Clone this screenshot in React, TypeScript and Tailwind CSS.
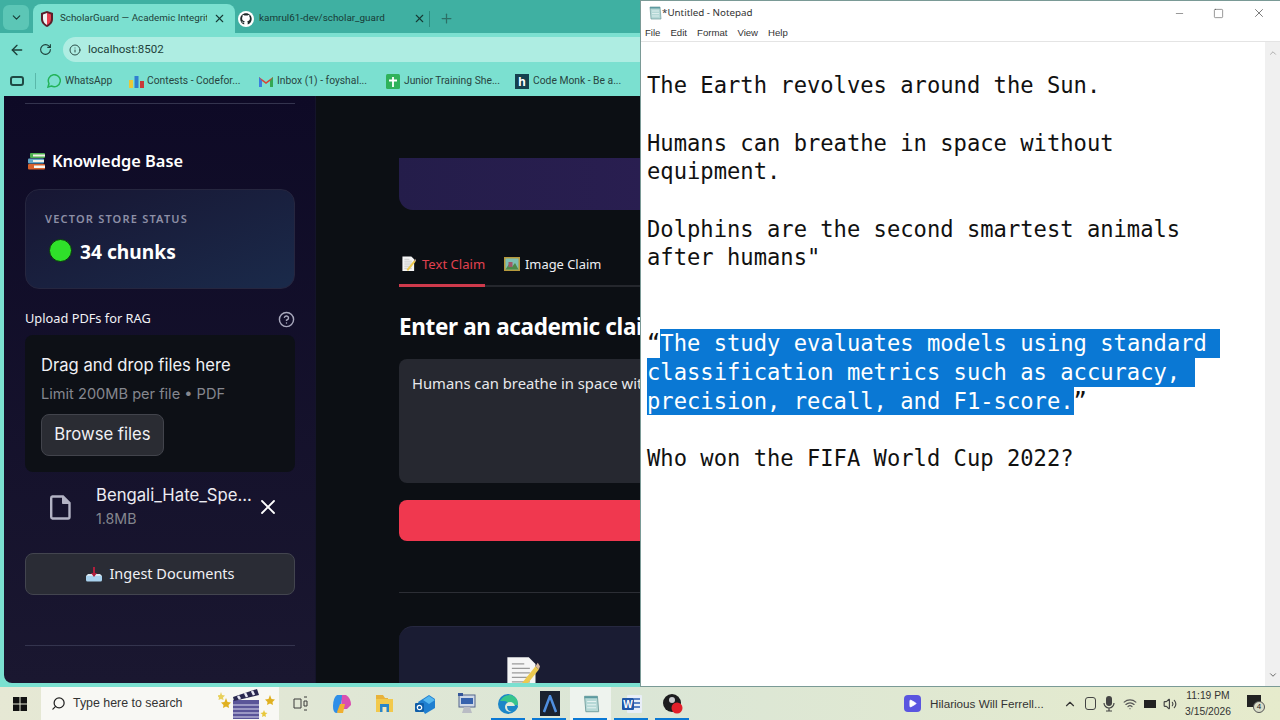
import {
  ArrowLeft,
  ChevronDown,
  ChevronUp,
  CircleHelp,
  Info,
  Minus,
  Play,
  Plus,
  RotateCw,
  Search,
  Square,
  Volume2,
  Wifi,
  X,
} from "lucide-react";
import type { ReactNode } from "react";

const sans = "font-['Noto_Sans',sans-serif]";
const inter = "font-['Inter',sans-serif]";
const roboto = "font-['Roboto',sans-serif]";
const mono = "font-['DejaVu_Sans_Mono',monospace]";

function Shield() {
  return (
    <svg width="14" height="16" viewBox="0 0 14 16" className="shrink-0">
      <path d="M7 0 L13 2 V8 C13 12 10 14.5 7 16 C4 14.5 1 12 1 8 V2 Z" fill="#5b1f2a" />
      <path d="M7 2 L11 3.4 V8 C11 11 9 12.8 7 14 Z" fill="#e8404f" />
      <path d="M7 2 L3 3.4 V8 C3 11 5 12.8 7 14 Z" fill="#f4f4f4" />
    </svg>
  );
}

function GithubMark() {
  return (
    <svg width="16" height="16" viewBox="0 0 16 16" className="shrink-0">
      <circle cx="8" cy="8" r="8" fill="#fff" />
      <path
        d="M8 2.2c-3.2 0-5.8 2.6-5.8 5.8 0 2.6 1.7 4.7 4 5.5v-1.6c-1.6.3-2-.7-2.2-1.2-.5-.8-1-.6-.5-.8.7 0 1.1.8 1.3 1 .6.7 1.2.5 1.5.3 0-.5.3-.8.5-1-1.4-.2-2.7-.7-2.7-3 0-.7.2-1.2.6-1.6-.1-.2-.3-.8.1-1.6 0 0 .5-.2 1.7.6a5.6 5.6 0 0 1 3 0c1.2-.8 1.7-.6 1.7-.6.3.8.1 1.4.1 1.6.4.4.6.9.6 1.6 0 2.3-1.3 2.8-2.7 3 .2.2.5.6.5 1.2v2.1c2.3-.8 4-2.9 4-5.5C13.8 4.8 11.2 2.2 8 2.2z"
        fill="#1f2a2a"
      />
    </svg>
  );
}

function Books() {
  return (
    <svg width="18" height="17" viewBox="0 0 18 17" className="shrink-0">
      <rect x="2" y="0" width="15" height="5" rx="1" fill="#4caf50" />
      <rect x="5" y="1.5" width="12" height="2" fill="#f1f1e6" />
      <rect x="0" y="5.5" width="16" height="5" rx="1" fill="#64a8c8" />
      <rect x="5" y="7" width="11" height="2" fill="#f1f1e6" />
      <rect x="0" y="11" width="17" height="5.5" rx="1" fill="#d9622b" />
      <rect x="6" y="12.5" width="11" height="2.5" fill="#f7f7f0" />
    </svg>
  );
}

function Inbox() {
  return (
    <svg width="18" height="15" viewBox="0 0 18 15" className="shrink-0">
      <path d="M1 9 H17 V13 a1.5 1.5 0 0 1 -1.5 1.5 H2.5 A1.5 1.5 0 0 1 1 13 Z" fill="#a9d2ee" />
      <path d="M1 9 L3 7 H15 L17 9 Z" fill="#d7e8f2" />
      <path d="M8 0 H10 V6 H12 L9 10 L6 6 H8 Z" fill="#b01e3c" />
    </svg>
  );
}

function Memo({ size = 16 }: { size?: number }) {
  return (
    <svg width={size} height={size} viewBox="0 0 32 32" className="shrink-0">
      <path d="M3 1 H22 L28 7 V32 H3 Z" fill="#f5f5f5" />
      <path d="M7 7 H18 M7 11 H23 M7 15 H23 M7 19 H23 M7 23 H23 M7 27 H23" stroke="#9a9a9a" strokeWidth="1" />
      <path d="M12 29 L28 9 L31 12 L15 32 Z" fill="#ecc94f" />
      <path d="M28 9 L30 6 L32 9 L31 12 Z" fill="#d6b8a0" />
    </svg>
  );
}

function Picture() {
  return (
    <svg width="16" height="14" viewBox="0 0 16 14" className="shrink-0">
      <rect width="16" height="14" fill="#b79a3c" />
      <rect x="1.5" y="1.5" width="13" height="11" fill="#7fc0b4" />
      <path d="M1.5 12.5 L5 7 L8 10 L11 6 L14.5 12.5 Z" fill="#4d8a48" />
      <rect x="4.5" y="5" width="4" height="5" fill="#a05a6a" />
    </svg>
  );
}

function Clapper() {
  return (
    <svg width="58" height="30" viewBox="0 0 58 30">
      <path d="M3 3 L4 6 L7 6.5 L5 8.5 L5.5 11 L3 10 L0.5 11 L1 8.5 L-1 6.5 L2 6 Z" fill="#e8d05a" />
      <path d="M8 9 L9.5 13 L13 13.5 L10.5 16 L11 19 L8 17.5 L5 19 L5.5 16 L3 13.5 L6.5 13 Z" fill="#e0b020" />
      <path d="M52 6 L53.5 10 L57 10.5 L54.5 13 L55 16 L52 14.5 L49 16 L49.5 13 L47 10.5 L50.5 10 Z" fill="#e0b020" />
      <path d="M46 21 L47 23.5 L49.5 24 L47.5 25.5 L48 28 L46 27 L44 28 L44.5 25.5 L42.5 24 L45 23.5 Z" fill="#e8c83a" />
      <rect x="15" y="11" width="26" height="19" fill="#5a5598" />
      <path d="M15 16 H41 M15 20 H41 M15 24 H41 M15 28 H41" stroke="#dcdcf0" strokeWidth="1.2" />
      <path d="M15 8 L39 0 L41 6 L16 12 Z" fill="#2a2850" />
      <path d="M20 7 L22 10 M27 4 L29 8 M34 2 L36 6" stroke="#e8e8f5" strokeWidth="2.5" />
    </svg>
  );
}

function NotepadIcon({ size = 14 }: { size?: number }) {
  return (
    <svg width={size} height={size} viewBox="0 0 14 14" className="shrink-0">
      <path d="M2 1 H12 L13 13 H3 Z" fill="#b5d8d6" stroke="#6f9c9c" strokeWidth="0.7" />
      <path d="M2 1 H12 V2.5 H2 Z" fill="#5d9aa0" />
      <path d="M4 5 H11 M4 7.5 H11 M4 10 H11" stroke="#e5f2f1" strokeWidth="0.8" />
    </svg>
  );
}

function TaskIcons() {
  return (
    <div className="flex items-center h-full ml-[1px]">
      {/* task view */}
      <div className="w-[40px] flex justify-center">
        <svg width="15" height="15" viewBox="0 0 15 15" fill="none" stroke="#3a3a3a" strokeWidth="1">
          <path d="M1 3 H8 V12 H1 Z M11 1 H14 M11 14 H14 M11 5 H14 V10 H11 Z" />
        </svg>
      </div>
      {/* copilot */}
      <div className="w-[44px] flex justify-center">
        <svg width="20" height="20" viewBox="0 0 20 20">
          <path d="M5 1 H11 L8 15 Q7 19 4 19 Q1 18 1 12 Q1 4 5 1Z" fill="#2f8fe8" />
          <path d="M10 1 H14 Q19 4 19 11 L15 15 H9 Z" fill="#d94fb0" />
          <path d="M8 10 H13 L11 19 H7 Q5 19 5 18 Z" fill="#f0b030" />
        </svg>
      </div>
      {/* explorer */}
      <div className="w-[40px] flex justify-center">
        <svg width="19" height="19" viewBox="0 0 19 19">
          <path d="M1 1 H8 L10 4 H13 V7 H1 Z" fill="#e8b23a" />
          <rect x="1" y="5" width="17" height="13" fill="#f2c94c" />
          <rect x="5" y="10" width="9" height="8" fill="#2a86c8" />
          <rect x="7.5" y="13" width="4" height="5" fill="#f2e8c0" />
        </svg>
      </div>
      {/* outlook */}
      <div className="w-[42px] flex justify-center">
        <svg width="20" height="20" viewBox="0 0 20 20">
          <path d="M3 8 L14 1 L20 5 V14 L10 20 Z" fill="#1f7fd0" />
          <path d="M8 6 L14 2 L20 6 L14 10 Z" fill="#55b7ef" />
          <rect x="0" y="9" width="9" height="9" rx="1" fill="#0f5ea8" />
          <circle cx="4.5" cy="13.5" r="2.2" fill="none" stroke="#fff" strokeWidth="1.2" />
        </svg>
      </div>
      {/* control panel */}
      <div className="w-[41px] flex justify-center">
        <svg width="18" height="22" viewBox="0 0 18 22">
          <rect x="1" y="2" width="16" height="12" fill="#cfd8e6" stroke="#53648c" />
          <rect x="3" y="5" width="12" height="6" fill="#3662ad" />
          <path d="M6 14 L4 20 H14 L12 14 Z" fill="#b9bcc4" />
          <rect x="0" y="0" width="5" height="3" fill="#35569a" />
        </svg>
      </div>
      {/* edge */}
      <div className="w-[42px] flex justify-center">
        <svg width="20" height="20" viewBox="0 0 20 20">
          <circle cx="10" cy="10" r="10" fill="#1b86c8" />
          <path d="M2 7 Q6 0 13 1 Q20 3 20 11 L10 11 Q10 7 6 7 Q3 7 2 7Z" fill="#37c58c" />
          <circle cx="12" cy="13" r="5" fill="#e2ebda" />
          <path d="M9 12 H20 Q19 17 14 18 Q9 17 9 12Z" fill="#1b86c8" />
        </svg>
      </div>
      {/* dark tile */}
      <div className="w-[41px] flex justify-center">
        <div className="w-[20px] h-[25px] bg-[#1a2230] flex items-center justify-center">
          <svg width="14" height="18" viewBox="0 0 14 18" fill="none" stroke="#4f8fe0" strokeWidth="2.5">
            <path d="M1 17 L7 1 L13 17" />
          </svg>
        </div>
      </div>
      {/* notepad */}
      <div className="w-[41px] h-full bg-[#eef3ee] flex justify-center items-center">
        <NotepadIcon size={18} />
      </div>
      {/* word */}
      <div className="w-[41px] flex justify-center">
        <svg width="20" height="20" viewBox="0 0 20 20">
          <rect x="5" y="1" width="15" height="18" rx="1" fill="#e8eef8" />
          <path d="M12 5 H18 M12 9 H18 M12 13 H18" stroke="#2b5fb4" strokeWidth="1.5" />
          <rect x="0" y="4" width="12" height="12" rx="1" fill="#1f56a8" />
          <text x="6" y="13.5" textAnchor="middle" fontSize="10" fontWeight="700" fill="#fff" fontFamily="Liberation Sans">
            W
          </text>
        </svg>
      </div>
      {/* recorder */}
      <div className="w-[42px] flex justify-center">
        <svg width="20" height="22" viewBox="0 0 20 22">
          <circle cx="9" cy="10" r="9" fill="#1c1c1e" />
          <circle cx="9" cy="7" r="3" fill="#c9ccd0" />
          <circle cx="14" cy="15" r="5.5" fill="#e21f2a" />
        </svg>
      </div>
    </div>
  );
}

function Bookmark({ icon, label, width }: { icon: ReactNode; label: string; width: string }) {
  return (
    <div className={`flex items-center shrink-0 ${width}`}>
      <div className="w-[18px] shrink-0">{icon}</div>
      <span className={`${roboto} text-[10.3px] text-[#28443f] whitespace-nowrap`}>{label}</span>
    </div>
  );
}

function Browser() {
  return (
    <div className={`flex-1 min-h-0 flex flex-col bg-[#7be0d0] ${inter}`}>
      {/* tab strip */}
      <div className="h-[33px] bg-[#3fb0a2] flex items-end pl-[3px] shrink-0">
        <div className="w-[26px] h-[25px] mb-[3px] bg-[#5cc6b6] rounded-md flex items-center justify-center mr-[4px]">
          <ChevronDown size={13} className="text-[#173a35]" />
        </div>
        <div className="w-[202px] h-[29px] bg-[#7be0d0] rounded-t-lg flex items-center pl-[7px] pr-[9px] gap-[6px]">
          <Shield />
          <span className={`${roboto} text-[9.8px] text-[#1d3f39] whitespace-nowrap overflow-hidden flex-1`}>
            ScholarGuard — Academic Integrit
          </span>
          <X size={13} className="text-[#173a35] shrink-0" />
        </div>
        <div className="w-[194px] h-[29px] flex items-center pl-[3px] pr-[3px] gap-[5px]">
          <GithubMark />
          <span className={`${roboto} text-[9.9px] text-[#173a35] whitespace-nowrap flex-1`}>
            kamrul61-dev/scholar_guard
          </span>
          <X size={13} className="text-[#173a35] shrink-0" />
        </div>
        <div className="h-[29px] flex items-center">
          <div className="w-px h-[16px] bg-[#2a8a7e] mr-[9px]" />
          <Plus size={15} className="text-[#2c6f66]" />
        </div>
      </div>
      {/* address bar */}
      <div className="h-[33px] flex items-center shrink-0 pl-[9px]">
        <ArrowLeft size={16} className="text-[#1d3f39]" />
        <RotateCw size={13} className="text-[#1d3f39] ml-[14px]" />
        <div className="ml-[11px] flex-1 h-[25px] bg-[#aeede2] rounded-l-full flex items-center pl-[6px] gap-[7px]">
          <Info size={12} className="text-[#2c4f49]" />
          <span className={`${roboto} text-[11.5px] text-[#1d3f39]`}>localhost:8502</span>
        </div>
      </div>
      {/* bookmarks */}
      <div className="h-[30px] flex items-center shrink-0 pl-[10px]">
        <div className="w-[14px] h-[10px] rounded-[3px] border-2 border-[#1f4a44] mr-[11px]" />
        <div className="w-px h-[16px] bg-[#5ab8aa] mr-[11px]" />
        <Bookmark
          width="w-[82px]"
          label="WhatsApp"
          icon={
            <svg width="14" height="14" viewBox="0 0 14 14" fill="none" stroke="#24b35a" strokeWidth="1.5">
              <path d="M1 13 L2 9.5 A6 6 0 1 1 4.5 12 Z" />
            </svg>
          }
        />
        <Bookmark
          width="w-[130px]"
          label="Contests - Codefor..."
          icon={
            <svg width="15" height="13" viewBox="0 0 15 13">
              <rect y="5" width="4" height="8" fill="#e8c83a" />
              <rect x="5.5" y="1" width="4" height="12" fill="#2f7fd0" />
              <rect x="11" y="6" width="4" height="7" fill="#c83a3a" />
            </svg>
          }
        />
        <Bookmark
          width="w-[127px]"
          label="Inbox (1) - foyshal..."
          icon={
            <svg width="14" height="11" viewBox="0 0 14 11">
              <path d="M0 11 V1 L7 6 L14 1 V11 H11 V5 L7 8 L3 5 V11 Z" fill="#d8453a" />
              <path d="M0 1 L3 5 V11 H0Z" fill="#3a7fe0" />
              <path d="M14 1 L11 5 V11 H14Z" fill="#34a853" />
            </svg>
          }
        />
        <Bookmark
          width="w-[129px]"
          label="Junior Training She..."
          icon={
            <svg width="14" height="15" viewBox="0 0 14 15">
              <rect width="14" height="15" rx="1.5" fill="#2fb25a" />
              <path d="M7 3 V13 M3 6.5 H11" stroke="#fff" strokeWidth="1.8" />
            </svg>
          }
        />
        <Bookmark
          width="w-[120px]"
          label="Code Monk - Be a..."
          icon={
            <div className="w-[14px] h-[15px] bg-[#16404f] text-white text-[12px] font-bold leading-[15px] text-center">h</div>
          }
        />
      </div>
      {/* page */}
      <div className="flex-1 min-h-0 flex pl-[4px] pb-[4px]">
        <Sidebar />
        <Main />
      </div>
    </div>
  );
}

function Sidebar() {
  return (
    <div className="w-[312px] shrink-0 rounded-bl-lg bg-gradient-to-b from-[#0e0a26] to-[#1a1730] px-[21px] pt-[7px] overflow-hidden border-r border-[#14142a]">
      <div className="h-px w-[270px] bg-[#34344e]" />
      {/* heading */}
      <div className="mt-[46px] flex items-center h-[22px] pl-[3px]">
        <Books />
        <span className={`${sans} ml-[6px] text-[16.4px] font-semibold text-white leading-none`}>Knowledge Base</span>
      </div>
      {/* status card */}
      <div className="mt-[17px] w-[270px] h-[100px] rounded-[14px] border border-[#26263f] bg-gradient-to-br from-[#171633] to-[#1a2a4a] pl-[19px] pt-[21px]">
        <div className={`${sans} text-[11px] font-semibold tracking-[1.2px] text-[#8d8fa6] leading-[16px]`}>
          VECTOR STORE STATUS
        </div>
        <div className="mt-[12px] flex items-center pl-[4px] gap-[8px]">
          <div className="w-[23px] h-[23px] rounded-full bg-[#2fe02a] border border-[#0b3a0b]" />
          <span className={`${sans} text-[19.2px] font-bold text-white leading-none mt-[2px]`}>34 chunks</span>
        </div>
      </div>
      {/* uploader */}
      <div className="mt-[21px] w-[270px] flex items-center justify-between h-[18px]">
        <span className={`${sans} text-[12.8px] text-[#f2f2f6]`}>Upload PDFs for RAG</span>
        <CircleHelp size={17} className="text-[#a9a9bd]" />
      </div>
      <div className="mt-[7px] w-[270px] h-[137px] rounded-lg bg-[#0d1016] pl-[16px] pt-[20px]">
        <div className="text-[16.6px] text-[#f0f0f4] leading-[20px]">Drag and drop files here</div>
        <div className="mt-[10px] text-[14.6px] text-[#85878f] leading-[18px]">Limit 200MB per file • PDF</div>
        <div className="mt-[11px] w-[123px] h-[42px] rounded-lg bg-[#2a2c33] border border-[#42444c] flex items-center justify-center text-[16.7px] text-[#f0f0f4]">
          Browse files
        </div>
      </div>
      {/* file row */}
      <div className="mt-[7px] flex w-[270px] items-center h-[56px]">
        <svg width="21" height="25" viewBox="0 0 21 25" fill="none" stroke="#b3b3c4" strokeWidth="2.4" className="ml-[25px] shrink-0">
          <path d="M2.5 1.5 H13 L19.5 8 V22 a1.5 1.5 0 0 1 -1.5 1.5 H2.5 a1.5 1.5 0 0 1 -1.3 -1.5 V3 a1.5 1.5 0 0 1 1.3 -1.5 Z" />
          <path d="M12.5 1.5 V8.5 H19.5" fill="#b3b3c4" strokeWidth="1" />
        </svg>
        <div className="ml-[25px] w-[156px]">
          <div className="text-[16.7px] text-[#ececf2] leading-[24px] whitespace-nowrap">Bengali_Hate_Spe...</div>
          <div className="text-[14.2px] text-[#85878f] leading-[24px]">1.8MB</div>
        </div>
        <X size={24} strokeWidth={1.8} className="text-white ml-[4px] shrink-0" />
      </div>
      {/* ingest */}
      <div className="mt-[18px] w-[270px] h-[42px] rounded-lg bg-[#2a2c35] border border-[#43454f] flex items-center justify-center gap-[6px]">
        <Inbox />
        <span className={`${sans} text-[14.5px] text-[#f0f0f4]`}>Ingest Documents</span>
      </div>
      <div className="mt-[50px] h-px w-[270px] bg-[#34344e]" />
    </div>
  );
}

function Main() {
  return (
    <div className="flex-1 min-w-0 bg-[#0c0f14] pl-[83px] pr-[83px] pt-[62px] overflow-hidden">
      {/* hero */}
      <div className="h-[52px] rounded-b-[14px] bg-gradient-to-r from-[#241d4a] to-[#34205e]" />
      {/* tabs */}
      <div className="mt-[41px] h-[36px] border-b-2 border-[#25272d] flex">
        <div className="w-[86px] h-[36px] border-b-[3px] border-[#cf3a4c] flex items-start pt-[4px] pl-[2px] gap-[6px]">
          <div className="mt-[1px]">
            <Memo size={15} />
          </div>
          <span className={`${sans} text-[13.1px] text-[#e0414f] whitespace-nowrap leading-[18px]`}>Text Claim</span>
        </div>
        <div className="ml-[19px] flex items-start pt-[4px] gap-[5px]">
          <div className="mt-[2px]">
            <Picture />
          </div>
          <span className={`${sans} text-[12.9px] text-[#eeeef2] whitespace-nowrap leading-[18px]`}>Image Claim</span>
        </div>
      </div>
      {/* claim input */}
      <div className={`${sans} mt-[23px] text-[22.5px] font-bold tracking-[-0.35px] text-white leading-[34px] whitespace-nowrap`}>
        Enter an academic claim
      </div>
      <div className="mt-[15px] h-[124px] rounded-lg bg-[#262830] pl-[13px] pt-[12px]">
        <span className={`${sans} text-[14.8px] text-[#e8e8ec] whitespace-nowrap`}>
          Humans can breathe in space without equipment.
        </span>
      </div>
      <div className="mt-[17px] h-[41px] rounded-lg bg-[#f0384f]" />
      <div className="mt-[51px] h-px bg-[#2c2e35]" />
      {/* result card */}
      <div className="relative mt-[33px] h-[80px] rounded-t-[14px] border-t border-[#262840] bg-[#1a1c33] flex justify-center">
        <div className="absolute left-[105px] top-[29px]">
          <Memo size={36} />
        </div>
      </div>
    </div>
  );
}

function Line({ text }: { text: string }) {
  return <div className="h-[28.67px] whitespace-pre">{text || " "}</div>;
}

function Notepad() {
  return (
    <div className="absolute left-[640px] top-0 w-[640px] h-[687px] bg-white border-l border-[#7a9a96] border-t border-b flex flex-col">
      {/* title bar */}
      <div className={`h-[24px] flex items-center pl-[7px] ${sans} shrink-0`}>
        <NotepadIcon size={14} />
        <span className="text-[9.8px] text-[#333]">*Untitled - Notepad</span>
        <div className="ml-auto flex items-center">
          <Minus size={11} strokeWidth={1.2} className="text-[#444] mr-[28px]" />
          <Square size={11} strokeWidth={1.2} className="text-[#444] mr-[28px]" />
          <X size={14} strokeWidth={1.2} className="text-[#444] mr-[14px]" />
        </div>
      </div>
      {/* menu */}
      <div className="h-[17px] flex items-center pl-[4px] gap-[10px] text-[9.6px] text-[#333] border-b border-[#e4e4e4] shrink-0 font-['Liberation_Sans',sans-serif]">
        <span>File</span>
        <span>Edit</span>
        <span>Format</span>
        <span>View</span>
        <span>Help</span>
      </div>
      <div className="flex-1 min-h-0 flex">
        {/* text */}
        <div className={`flex-1 pl-[6px] pt-[29.3px] ${mono} text-[22.15px] leading-[28.67px] text-[#111]`}>
          <Line text="The Earth revolves around the Sun." />
          <Line text="" />
          <Line text="Humans can breathe in space without" />
          <Line text="equipment." />
          <Line text="" />
          <Line text="Dolphins are the second smartest animals" />
          <Line text={'after humans"'} />
          <Line text="" />
          <Line text="" />
          <div className="h-[28.67px] whitespace-pre">
            “<span className="inline-block h-[28.67px] w-[560px] bg-[#0a78d4] text-white align-top">The study evaluates models using standard</span>
          </div>
          <div className="h-[28.67px] whitespace-pre">
            <span className="inline-block h-[28.67px] w-[548px] bg-[#0a78d4] text-white align-top">classification metrics such as accuracy,</span>
          </div>
          <div className="h-[28.67px] whitespace-pre">
            <span className="bg-[#0a78d4] text-white inline-block h-[28.67px] align-top">precision, recall, and F1-score.</span>”
          </div>
          <Line text="" />
          <Line text="Who won the FIFA World Cup 2022?" />
        </div>
        {/* scrollbar */}
        <div className="w-[15px] bg-[#f0f0f0] flex flex-col items-center justify-between py-[6px] shrink-0">
          <ChevronUp size={10} className="text-[#a0a0a0]" />
          <ChevronDown size={10} className="text-[#505050]" />
        </div>
      </div>
    </div>
  );
}

function Taskbar() {
  return (
    <div className="relative h-[33px] shrink-0 flex items-center bg-gradient-to-r from-[#e6e8d4] via-[#dbe6d6] to-[#e6ebcc] font-['Liberation_Sans',sans-serif]">
      <div className="w-[41px] flex justify-center pr-[1px]">
        <svg width="14" height="14" viewBox="0 0 14 14" fill="#111">
          <rect width="6.5" height="6.5" />
          <rect x="7.5" width="6.5" height="6.5" />
          <rect y="7.5" width="6.5" height="6.5" />
          <rect x="7.5" y="7.5" width="6.5" height="6.5" />
        </svg>
      </div>
      <div className="w-[238px] h-full bg-[#f8f8f4] flex items-center pl-[10px]">
        <Search size={15} className="text-[#222] -scale-x-100" />
        <span className="ml-[7px] w-[145px] text-[12.4px] text-[#333] whitespace-nowrap">Type here to search</span>
        <Clapper />
      </div>
      <TaskIcons />
      {/* tray */}
      <div className="ml-auto flex items-center h-full">
        <div className="w-[17px] h-[17px] rounded-[4px] bg-[#5a55e0] flex items-center justify-center">
          <Play size={9} fill="#fff" className="text-white" />
        </div>
        <span className="ml-[9px] w-[113px] text-[11.7px] text-[#333] whitespace-nowrap">Hilarious Will Ferrell...</span>
        <ChevronUp size={14} className="ml-[20px] text-[#333]" />
        <div className="ml-[8px] w-[11px] h-[13px] rounded-[3px] border border-[#444]" />
        <svg width="14" height="16" viewBox="0 0 14 16" fill="#444" className="ml-[6px]">
          <rect x="4" y="0" width="6" height="10" rx="3" />
          <path d="M2 7 a5 5 0 0 0 10 0 M7 12 V15 M4 15 H10" fill="none" stroke="#444" strokeWidth="1.2" />
        </svg>
        <Wifi size={14} className="ml-[7px] text-[#555]" />
        <div className="ml-[7px] w-[12px] h-[8px] border border-[#222] bg-[#222]" />
        <Volume2 size={14} className="ml-[7px] text-[#444]" />
        <div className="ml-[3px] w-[56px] text-[10.3px] text-[#333] text-center leading-[16px]">
          <div>11:19 PM</div>
          <div>3/15/2026</div>
        </div>
        <div className="relative ml-[11px] mr-[15px] w-[18px] h-[18px]">
          <div className="w-[14px] h-[12px] bg-[#222]" />
          <div className="absolute right-0 bottom-0 w-[12px] h-[12px] rounded-full bg-[#d8dcc8] border border-[#555] text-[8px] leading-[10px] text-center text-[#222]">
            4
          </div>
        </div>
      </div>
      {/* running app indicators */}
      <div className="absolute left-[491px] bottom-0 flex gap-[7px]">
        <div className="w-[34px] h-[2px] bg-[#0a78d4]" />
        <div className="w-[34px] h-[2px] bg-[#0a78d4]" />
        <div className="w-[34px] h-[2px] bg-[#0a78d4]" />
        <div className="w-[34px] h-[2px] bg-[#0a78d4]" />
        <div className="w-[34px] h-[2px] bg-[#0a78d4]" />
      </div>
    </div>
  );
}

export default function App() {
  return (
    <div className="relative w-[1280px] h-[720px] overflow-hidden flex flex-col">
      <Browser />
      <Taskbar />
      <Notepad />
    </div>
  );
}
